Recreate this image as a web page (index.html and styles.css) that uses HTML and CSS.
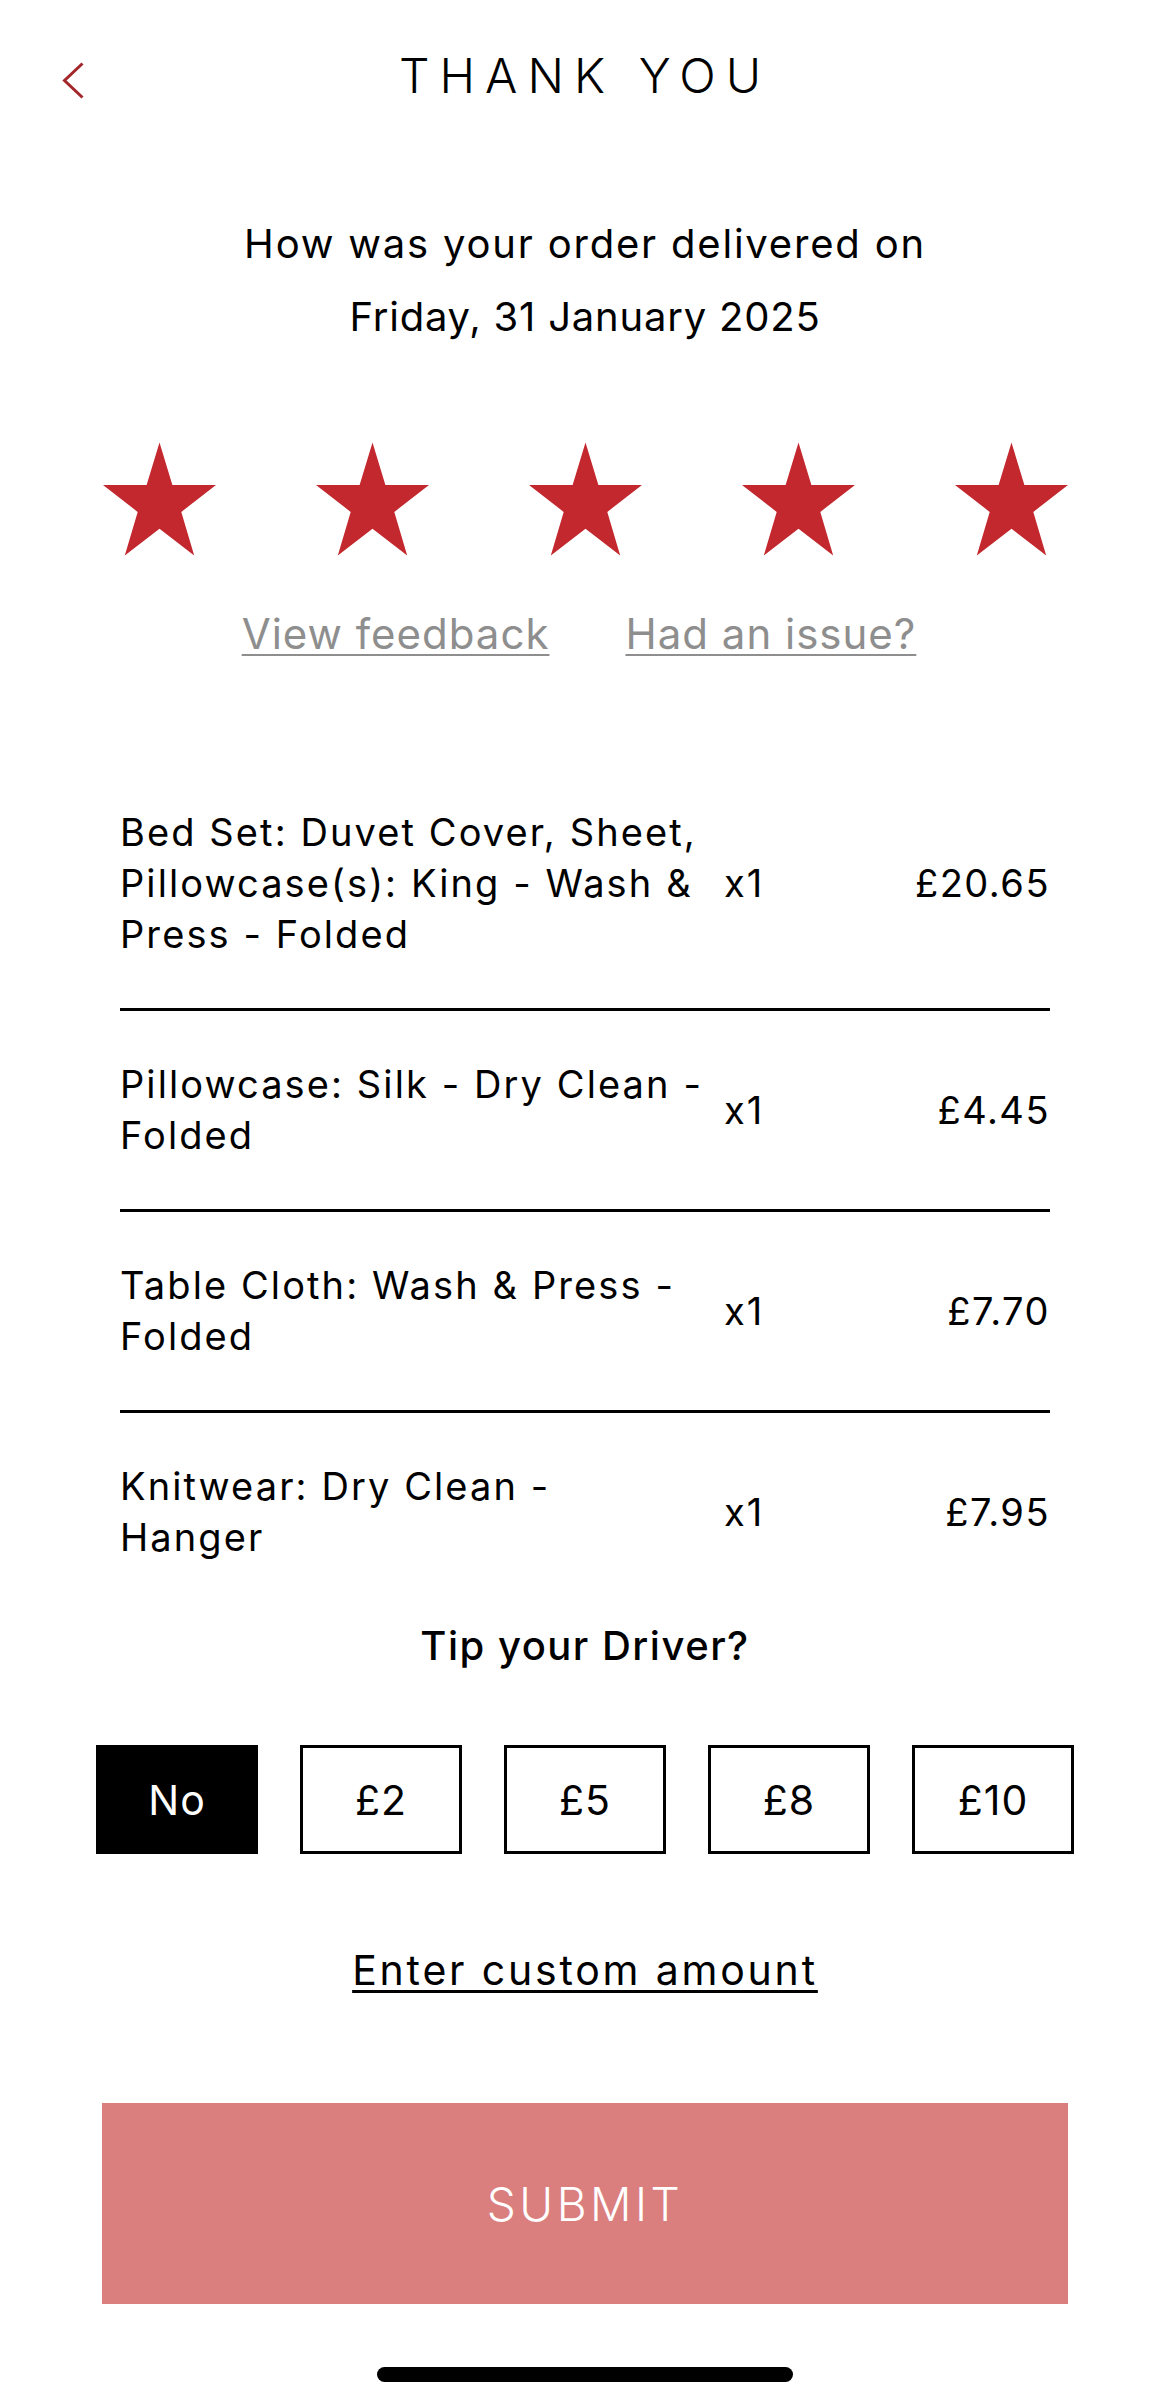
FILE: index.html
```html
<!DOCTYPE html>
<html lang="en">
<head>
<meta charset="utf-8">
<title>Thank you</title>
<link rel="stylesheet" href="styles.css">
</head>
<body>
<div class="screen">
  <header class="topbar">
    <button class="back" aria-label="Back">
      <svg viewBox="0 0 24 40" width="24" height="40"><polyline points="20.5,2.5 2.5,19.5 20.5,36.5" fill="none" stroke="#a3262b" stroke-width="3"/></svg>
    </button>
    <h1 class="title">THANK YOU</h1>
    <span></span>
  </header>

  <p class="question">How was your order delivered on<br><span class="date">Friday, 31 January 2025</span></p>

  <div class="stars">
    <svg class="star" viewBox="0 0 114 114"><polygon points="57,0 70,43 114,43 79,70 92,114 57,87 22,114 35,70 0,43 44,43"/></svg>
    <svg class="star" viewBox="0 0 114 114"><polygon points="57,0 70,43 114,43 79,70 92,114 57,87 22,114 35,70 0,43 44,43"/></svg>
    <svg class="star" viewBox="0 0 114 114"><polygon points="57,0 70,43 114,43 79,70 92,114 57,87 22,114 35,70 0,43 44,43"/></svg>
    <svg class="star" viewBox="0 0 114 114"><polygon points="57,0 70,43 114,43 79,70 92,114 57,87 22,114 35,70 0,43 44,43"/></svg>
    <svg class="star" viewBox="0 0 114 114"><polygon points="57,0 70,43 114,43 79,70 92,114 57,87 22,114 35,70 0,43 44,43"/></svg>
  </div>

  <nav class="links">
    <a href="#">View feedback</a>
    <a href="#">Had an issue?</a>
  </nav>

  <ul class="items">
    <li class="item"><span class="name">Bed Set: Duvet Cover, Sheet,<br>Pillowcase(s): King - Wash &amp;<br>Press - Folded</span><span class="qty">x1</span><span class="price">£20.65</span></li>
    <li class="item"><span class="name">Pillowcase: Silk - Dry Clean -<br>Folded</span><span class="qty">x1</span><span class="price">£4.45</span></li>
    <li class="item"><span class="name">Table Cloth: Wash &amp; Press -<br>Folded</span><span class="qty">x1</span><span class="price">£7.70</span></li>
    <li class="item"><span class="name">Knitwear: Dry Clean -<br>Hanger</span><span class="qty">x1</span><span class="price">£7.95</span></li>
  </ul>

  <h2 class="tip-title">Tip your Driver?</h2>
  <div class="tip-options">
    <button class="tip-option is-selected">No</button>
    <button class="tip-option">£2</button>
    <button class="tip-option">£5</button>
    <button class="tip-option">£8</button>
    <button class="tip-option">£10</button>
  </div>
  <a class="custom" href="#">Enter custom amount</a>

  <button class="submit">SUBMIT</button>
  <div class="home-indicator"></div>
</div>
</body>
</html>
```
FILE: styles.css
```css
html, body {
  margin: 0;
  padding: 0;
  background: #fff;
}
body {
  font-family: Inter, "Noto Sans", sans-serif;
  color: #000;
}
.screen {
  width: 1170px;
  height: 2406px;
  overflow: hidden;
  display: flex;
  flex-direction: column;
}

/* header */
.topbar {
  display: grid;
  grid-template-columns: 1fr auto 1fr;
  padding-top: 47px;
}
.back {
  justify-self: start;
  align-self: start;
  margin: 14px 0 0 62px;
  width: 24px;
  height: 40px;
  padding: 0;
  border: 0;
  background: none;
}
.back svg { display: block; }
.title {
  margin: 0;
  font-size: 48px;
  font-weight: 350;
  line-height: 58px;
  letter-spacing: 0.21em;
}

/* question */
.question {
  margin: 102px 0 0;
  text-align: center;
  font-size: 40px;
  line-height: 73px;
  letter-spacing: 1.8px;
}
.date { letter-spacing: 0.8px; }

/* stars */
.stars {
  display: flex;
  justify-content: center;
  gap: 100px;
  margin-top: 89px;
}
.star {
  display: block;
  width: 113px;
  height: 114px;
  fill: #c2282e;
}

/* links */
.links {
  display: flex;
  justify-content: center;
  gap: 76px;
  margin-top: 52px;
  padding-right: 12px;
  font-size: 42px;
  line-height: 52px;
  letter-spacing: 1px;
}
.links a {
  color: #8e8e8e;
  text-decoration: underline;
  text-decoration-thickness: 2px;
  text-underline-offset: 5px;
}

/* items */
.items {
  list-style: none;
  margin: 99px 120px 0;
  padding: 0;
}
.item {
  display: grid;
  grid-template-columns: 600px 1fr auto;
  column-gap: 4px;
  align-items: center;
  padding: 48px 0;
  border-bottom: 3px solid #000;
  font-size: 38px;
  line-height: 51px;
  letter-spacing: 2.1px;
}
.item:last-child { border-bottom: 0; }
.name { white-space: nowrap; }
.price { text-align: right; letter-spacing: 1.5px; }

/* tip */
.tip-title {
  margin: 10px 0 0;
  text-align: center;
  font-size: 40px;
  font-weight: 500;
  line-height: 49px;
  letter-spacing: 1.5px;
}
.tip-options {
  display: flex;
  justify-content: center;
  gap: 42px;
  margin-top: 75px;
}
.tip-option {
  box-sizing: border-box;
  width: 162px;
  height: 109px;
  display: flex;
  align-items: center;
  justify-content: center;
  border: 3px solid #000;
  background: #fff;
  color: #000;
  font-family: inherit;
  font-size: 41px;
  letter-spacing: 1px;
  padding: 0;
}
.tip-option.is-selected {
  background: #000;
  color: #fff;
}
.custom {
  display: block;
  width: max-content;
  margin: 92px auto 0;
  font-size: 41px;
  line-height: 49px;
  letter-spacing: 2.8px;
  color: #000;
  text-decoration: underline;
  text-decoration-thickness: 3px;
  text-underline-offset: 5px;
}

/* submit */
.submit {
  margin: 108px 102px 0;
  height: 201px;
  border: 0;
  background: #db7e7e;
  color: #fff;
  font-family: inherit;
  font-size: 46px;
  font-weight: 300;
  letter-spacing: 3.5px;
}
.home-indicator {
  width: 416px;
  height: 15px;
  border-radius: 8px;
  background: #000;
  margin: 63px auto 0;
}
```
